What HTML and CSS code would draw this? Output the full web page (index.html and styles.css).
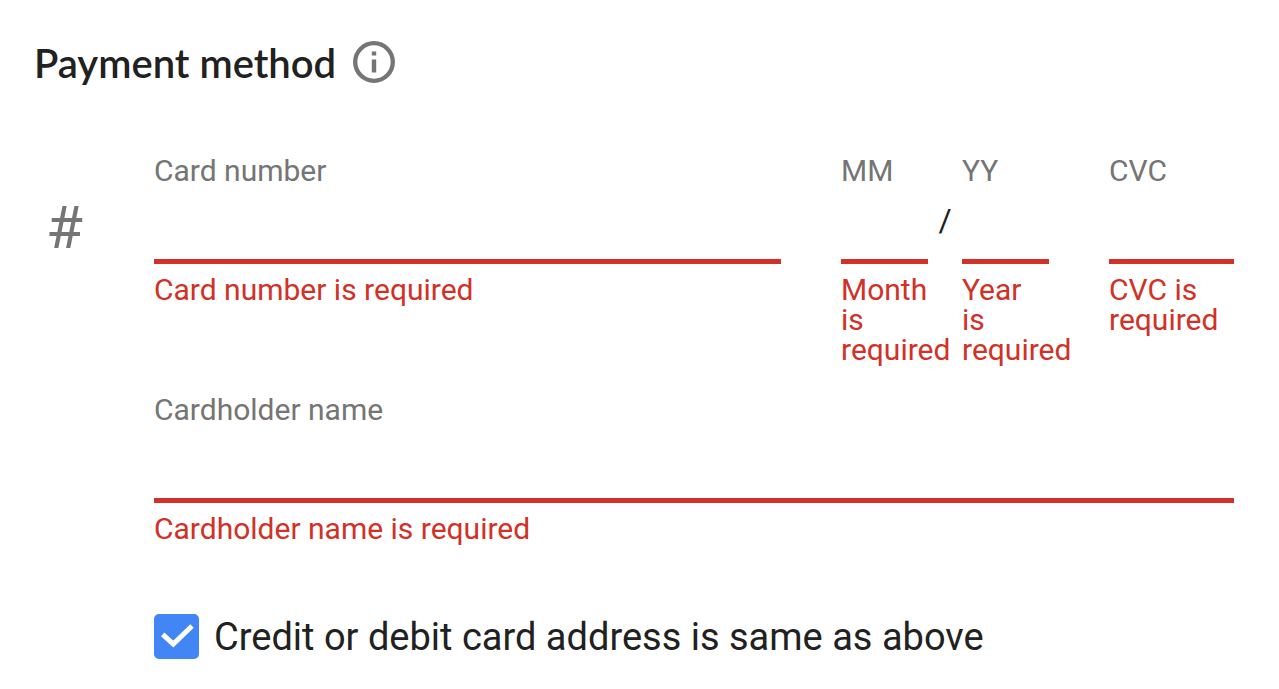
FILE: index.html
```html
<!DOCTYPE html>
<html lang="en">
<head>
    <meta charset="UTF-8">
    <meta name="viewport" content="width=device-width, initial-scale=1.0">
    <title>Payment method</title>
    <link rel="stylesheet" href="styles.css">
</head>
<body>
    <form class="payment">
        <div class="payment-header">
            <h2>Payment method</h2>
            <svg class="info-icon" viewBox="0 0 42 42" role="img" aria-label="Info">
                <circle cx="21" cy="21" r="18.800" fill="none" stroke="#757575" stroke-width="4.300"/>
                <path d="M18.800 10.500h4.400v4h-4.400zM18.800 18.500h4.400v13h-4.400z" fill="#757575"/>
            </svg>
        </div>

        <div class="payment-body">
            <div class="hash-icon" aria-hidden="true">#</div>

            <div class="fields">
                <div class="card-row">
                    <div class="field card-number">
                        <label for="cardNumber">Card number</label>
                        <input type="text" id="cardNumber">
                        <p class="error">Card number is required</p>
                    </div>
                    <div class="expiry">
                        <div class="field date">
                            <label for="month">MM</label>
                            <input type="text" id="month">
                            <p class="error">Month is required</p>
                        </div>
                        <span class="slash">/</span>
                        <div class="field date">
                            <label for="year">YY</label>
                            <input type="text" id="year">
                            <p class="error">Year is required</p>
                        </div>
                    </div>
                    <div class="field cvc">
                        <label for="cvc">CVC</label>
                        <input type="text" id="cvc">
                        <p class="error">CVC is required</p>
                    </div>
                </div>

                <div class="field">
                    <label for="cardholder">Cardholder name</label>
                    <input type="text" id="cardholder">
                    <p class="error">Cardholder name is required</p>
                </div>

                <div class="same-address">
                    <span class="checkbox">
                        <input type="checkbox" id="sameAddress" checked>
                        <svg viewBox="0 0 45 45" aria-hidden="true">
                            <path d="M8.700 20.300L19.300 30L38 12" fill="none" stroke="#fff" stroke-width="5"/>
                        </svg>
                    </span>
                    <label for="sameAddress">Credit or debit card address is same as above</label>
                </div>
            </div>
        </div>
    </form>
</body>
</html>
```

FILE: styles.css
```css
* {
    box-sizing: border-box;
}
body {
    margin: 0;
    background: #fff;
    color: #212121;
    font-family: Roboto, sans-serif;
}
.payment {
    padding: 40px 45px 28px 34px;
}
.payment-header {
    display: flex;
    align-items: center;
    gap: 17px;
    height: 46px;
}
.payment-header h2 {
    margin: 0;
    font-family: Lato, sans-serif;
    font-size: 40px;
    font-weight: 600;
    line-height: 46px;
}
.info-icon {
    width: 42px;
    height: 42px;
    margin-bottom: 2px;
}
.payment-body {
    display: flex;
    margin-top: 70px;
}
.hash-icon {
    flex: 0 0 120px;
    padding: 42px 0 0 12px;
    color: #757575;
    font-size: 60px;
    line-height: 60px;
}
.fields {
    flex: 1;
    min-width: 0;
}
.card-row {
    display: flex;
    gap: 60px;
    margin-bottom: 30px;
}
.field {
    font-size: 30px;
    line-height: 30px;
}
.field label {
    display: block;
    color: #757575;
}
.field input {
    display: block;
    width: 100%;
    height: 78px;
    padding: 0;
    border: 0;
    border-bottom: 5px solid #d13127;
    outline: 0;
    background: none;
    color: inherit;
    font: inherit;
}
.error {
    margin: 11px 0 0;
    color: #d13127;
}
.card-number {
    flex: 1;
}
.expiry {
    display: flex;
}
.date {
    width: 87px;
}
.slash {
    width: 34px;
    padding-top: 46px;
    font-size: 32px;
    line-height: 36px;
    text-align: center;
}
.cvc {
    width: 125px;
}
.same-address {
    display: flex;
    gap: 15px;
    margin-top: 70px;
    font-size: 38px;
    line-height: 47px;
}
.checkbox {
    position: relative;
    width: 45px;
    height: 45px;
}
.checkbox input {
    display: block;
    width: 45px;
    height: 45px;
    margin: 0;
    border: 2px solid #757575;
    border-radius: 5px;
    appearance: none;
}
.checkbox input:checked {
    border-color: #4285f4;
    background: #4285f4;
}
.checkbox svg {
    position: absolute;
    inset: 0;
    pointer-events: none;
}
```
